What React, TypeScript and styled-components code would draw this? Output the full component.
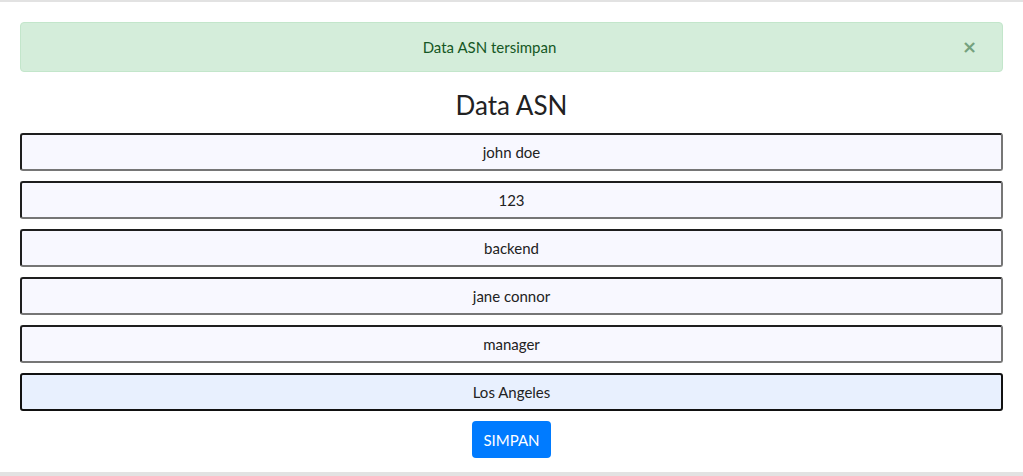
import * as React from "react";
import styled, { createGlobalStyle } from "styled-components";

const GlobalStyle = createGlobalStyle`
  body {
    margin: 0;
    background: #ffffff;
    font-family: Lato, "Open Sans", "Liberation Sans", sans-serif;
  }
`;

const Card = styled.div`
  box-sizing: border-box;
  width: 100%;
  height: 476px;
  border-top: 2px solid #e2e2e2;
  border-bottom: 4px solid #e2e2e2;
  padding: 20px 20px 12px;
  display: flex;
  flex-direction: column;
  align-items: stretch;
`;

const Alert = styled.div`
  position: relative;
  box-sizing: border-box;
  height: 50px;
  padding: 12px 64px 12px 20px;
  margin-bottom: 16px;
  background-color: #d4edda;
  border: 1px solid #c3e6cb;
  border-radius: 4px;
  color: #155724;
  font-size: 15px;
  line-height: 24px;
  text-align: center;
`;

const CloseButton = styled.button`
  position: absolute;
  top: 0;
  right: 0;
  height: 100%;
  padding: 0 25px 0 20px;
  background: transparent;
  border: 0;
  font-family: "DejaVu Sans", sans-serif;
  font-size: 18px;
  font-weight: 700;
  line-height: 1;
  color: #155724;
  opacity: 0.5;
  cursor: pointer;
`;

const Title = styled.h2`
  margin: 0 0 11px;
  font-size: 26px;
  font-weight: 400;
  line-height: 34px;
  color: #222;
  text-align: center;
`;

const Form = styled.form`
  display: flex;
  flex-direction: column;
  align-items: stretch;
  gap: 10px;
`;

const Field = styled.input<{ $active?: boolean }>`
  box-sizing: border-box;
  height: 38px;
  padding: 0 8px;
  border: 2px solid;
  border-color: #1e1e1e #767676 #767676 #1e1e1e;
  border-radius: 3px;
  background: #f8f8ff;
  font-family: inherit;
  font-size: 15px;
  color: #222;
  text-align: center;
  outline: none;
  caret-color: #000;

  ${(p) =>
    p.$active &&
    `
    background: #e8f0fe;
    border-color: #111;
  `}
`;

const SubmitButton = styled.button`
  align-self: center;
  width: 79px;
  height: 37px;
  border: 0;
  border-radius: 4px;
  background-color: #007bff;
  color: #fff;
  font-family: inherit;
  font-size: 15px;
  cursor: pointer;
`;

const fields = [
  { name: "nama", value: "john doe" },
  { name: "nip", value: "123" },
  { name: "jabatan", value: "backend" },
  { name: "atasan", value: "jane connor" },
  { name: "posisi", value: "manager" },
  { name: "kota", value: "Los Angeles" },
];

export default function App() {
  const [values, setValues] = React.useState(fields);
  const [showAlert, setShowAlert] = React.useState(true);

  let handleChange = (idx: number, val: string) => {
    const next = values.slice();
    next[idx] = { ...next[idx], value: val };
    setValues(next);
  };

  return (
    <>
      <GlobalStyle />
      <Card>
        {showAlert && (
          <Alert>
            Data ASN tersimpan
            <CloseButton type="button" onClick={() => setShowAlert(false)}>
              ×
            </CloseButton>
          </Alert>
        )}
        <Title>Data ASN</Title>
        <Form onSubmit={(e) => e.preventDefault()}>
          {values.map((f, i) => (
            <Field
              key={f.name}
              name={f.name}
              value={f.value}
              $active={i === values.length - 1}
              autoFocus={i === values.length - 1}
              onChange={(e) => handleChange(i, e.target.value)}
            />
          ))}
          <SubmitButton type="submit">SIMPAN</SubmitButton>
        </Form>
      </Card>
    </>
  );
}
